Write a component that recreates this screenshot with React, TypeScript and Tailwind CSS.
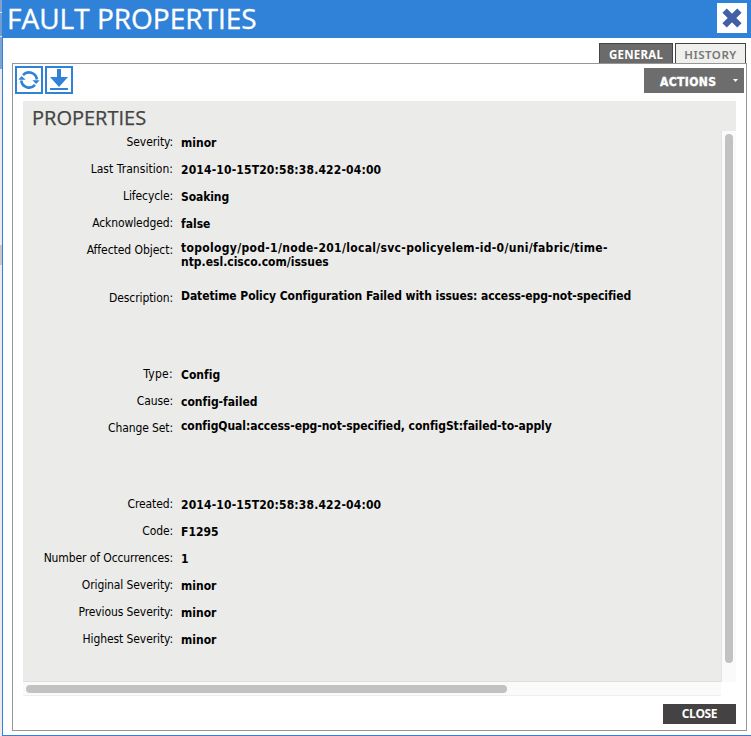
import React from "react";

type Line = { text: string; tracking?: string };
type Row = { label: string; lines: Line[]; height: string; offset: string; labelTracking?: string };

const ROW = "h-[27px]";
const CENTERED = "pt-[7px]";
const TOP = "pt-[4px]";
const DATE = { text: "2014-10-15T20:58:38.422-04:00", tracking: "tracking-[0.16px]" };

const rows: Row[] = [
  { label: "Severity:", lines: [{ text: "minor" }], height: ROW, offset: CENTERED },
  { label: "Last Transition:", lines: [DATE], height: ROW, offset: CENTERED, labelTracking: "tracking-[0.05px]" },
  { label: "Lifecycle:", lines: [{ text: "Soaking", tracking: "tracking-[-0.1px]" }], height: ROW, offset: CENTERED },
  { label: "Acknowledged:", lines: [{ text: "false" }], height: ROW, offset: CENTERED },
  {
    label: "Affected Object:",
    lines: [
      { text: "topology/pod-1/node-201/local/svc-policyelem-id-0/uni/fabric/time-", tracking: "tracking-[0.32px]" },
      { text: "ntp.esl.cisco.com/issues" },
    ],
    height: "h-[48px]",
    offset: TOP,
    labelTracking: "tracking-[-0.05px]",
  },
  {
    label: "Description:",
    lines: [
      {
        text: "Datetime Policy Configuration Failed with issues: access-epg-not-specified",
        tracking: "tracking-[-0.07px]",
      },
    ],
    height: "h-[76px]",
    offset: TOP,
  },
  { label: "Type:", lines: [{ text: "Config" }], height: ROW, offset: CENTERED, labelTracking: "tracking-[0.3px]" },
  { label: "Cause:", lines: [{ text: "config-failed" }], height: ROW, offset: CENTERED },
  {
    label: "Change Set:",
    lines: [
      { text: "configQual:access-epg-not-specified, configSt:failed-to-apply", tracking: "tracking-[-0.05px]" },
    ],
    height: "h-[76px]",
    offset: TOP,
  },
  { label: "Created:", lines: [DATE], height: ROW, offset: CENTERED },
  { label: "Code:", lines: [{ text: "F1295" }], height: ROW, offset: CENTERED },
  { label: "Number of Occurrences:", lines: [{ text: "1" }], height: ROW, offset: CENTERED },
  { label: "Original Severity:", lines: [{ text: "minor" }], height: ROW, offset: CENTERED },
  { label: "Previous Severity:", lines: [{ text: "minor" }], height: ROW, offset: CENTERED },
  { label: "Highest Severity:", lines: [{ text: "minor" }], height: ROW, offset: CENTERED },
];

function Header() {
  return (
    <header className="flex h-[38px] shrink-0 items-start justify-between bg-[#3081d8] pr-[4px] pl-[5px]">
      <h1 className="font-['Open_Sans',sans-serif] text-[28px] leading-[36px] whitespace-nowrap text-white [-webkit-text-stroke:0.35px_white]">
        FAULT PROPERTIES
      </h1>
      <button className="mt-[3px] flex h-[30px] w-[30px] items-center justify-center bg-white" aria-label="Close">
        <svg width="22" height="22" viewBox="0 0 22 22">
          <path d="M3.6 3.6L18.4 18.4M18.4 3.6L3.6 18.4" stroke="#4260a8" strokeWidth="6.2" />
        </svg>
      </button>
    </header>
  );
}

function Tabs() {
  return (
    <nav className="flex h-[25px] shrink-0 items-end justify-end gap-[2px] pr-[5px] font-['Noto_Sans',sans-serif] text-[11.5px]">
      <div className="flex h-[20px] w-[74px] items-center justify-center border border-b-0 border-[#444] bg-[#6b6b6b] pt-[3px] font-bold tracking-[0.25px] text-white">
        GENERAL
      </div>
      <div className="flex h-[20px] w-[71px] items-center justify-center border border-b-0 border-[#444] bg-[#efefed] pt-[3px] font-semibold tracking-[0.5px] text-[#777]">
        HISTORY
      </div>
    </nav>
  );
}

function Toolbar() {
  return (
    <div className="flex h-[37px] shrink-0 items-start justify-between pt-[2px] pr-[2px] pl-[2px]">
      <div className="flex gap-[2px]">
        <div className="h-[28px] w-[28px] border-2 border-[#3081d8]">
          <svg width="24" height="24" viewBox="0 0 24 24">
            <path
              d="M6 7.2A7.9 7.9 0 0 1 19.8 11.5M18 16.8A7.9 7.9 0 0 1 4.2 12.5"
              fill="none"
              stroke="#3081d8"
              strokeWidth="2.6"
            />
            <path d="M15.4 12.2H22.6L19.2 16ZM1.4 11.8H8.6L4.6 8Z" fill="#3081d8" />
          </svg>
        </div>
        <div className="h-[28px] w-[28px] border-2 border-[#3081d8]">
          <svg width="24" height="24" viewBox="0 0 24 24">
            <path d="M10 1H14V9H21L12 19L3 9H10ZM3 20H21V22H3Z" fill="#3081d8" />
          </svg>
        </div>
      </div>
      <button className="mt-[2px] flex h-[25px] w-[100px] items-center bg-[#6d6d6d] pl-[16px] font-['DejaVu_Sans_Condensed','DejaVu_Sans',sans-serif] text-[12px] font-bold text-white">
        <span className="w-[73px] pt-[2px] text-left tracking-[0.4px] [-webkit-text-stroke:0.4px_white]">ACTIONS</span>
        <svg width="5" height="3" viewBox="0 0 5 3">
          <path d="M0 0H5L2.5 3Z" fill="#fff" />
        </svg>
      </button>
    </div>
  );
}

function Properties() {
  return (
    <div className="ml-[10px] flex h-[581px] w-[713px] shrink-0 bg-[#ebebe9] font-['DejaVu_Sans_Condensed','DejaVu_Sans',sans-serif] text-[12px] text-black [font-variant-ligatures:none]">
      <div className="w-[698px] shrink-0 border-b border-[#dededc]">
        <h2 className="h-[28px] pl-[9px] font-['Open_Sans',sans-serif] text-[20px] leading-[34px] text-[#444] [-webkit-text-stroke:0.25px_#444]">
          PROPERTIES
        </h2>
        {rows.map((row) => (
          <div key={row.label} className={`flex ${row.height}`}>
            <div
              className={`w-[150px] shrink-0 pt-[6px] text-right leading-[14px] whitespace-nowrap ${row.labelTracking ?? "tracking-[-0.1px]"}`}
            >
              {row.label}
            </div>
            <div className={`ml-[8px] leading-[14px] font-bold whitespace-nowrap ${row.offset}`}>
              {row.lines.map((line) => (
                <div key={line.text} className={line.tracking}>
                  {line.text}
                </div>
              ))}
            </div>
          </div>
        ))}
      </div>
      <div className="mt-[30px] flex w-[15px] items-start justify-center border-l border-[#e2e2e2] bg-[#fafafa] pt-[3px]">
        <div className="h-[529px] w-[8px] rounded-full bg-[#c2c2c2]" />
      </div>
    </div>
  );
}

export default function App() {
  return (
    <div className="flex h-[736px] w-[751px] overflow-hidden bg-white">
      <div className="flex w-[2px] shrink-0 flex-col bg-[#ececee]">
        <div className="h-[12px] bg-[#7da3d3]" />
        <div className="h-px bg-[#dbe6f4]" />
        <div className="h-[23px] bg-[#6f9dd5]" />
        <div className="h-px bg-[#dbe6f4]" />
        <div className="h-[32px] bg-[#7da3d3]" />
        <div className="mt-[176px] h-[20px] bg-[#c9c9c9]" />
      </div>
      <div className="flex w-[749px] flex-col">
        <Header />
        <div className="flex h-[698px] flex-col border-b border-l border-[#3081d8] bg-white">
          <Tabs />
          <main className="ml-[9px] flex h-[668px] w-[735px] flex-col border border-[#969696]">
            <Toolbar />
            <Properties />
            <div className="ml-[10px] h-[14px] w-[698px] shrink-0 border-b border-[#eee] bg-[#fafafa] pt-[3px] pl-[3px]">
              <div className="h-[8px] w-[481px] rounded-full bg-[#c2c2c2]" />
            </div>
            <button className="mt-[8px] ml-[650px] h-[20px] w-[73px] shrink-0 bg-[#444243] font-['Open_Sans',sans-serif] text-[12px] leading-[20px] font-bold tracking-[-0.4px] text-white">
              CLOSE
            </button>
          </main>
        </div>
      </div>
    </div>
  );
}
